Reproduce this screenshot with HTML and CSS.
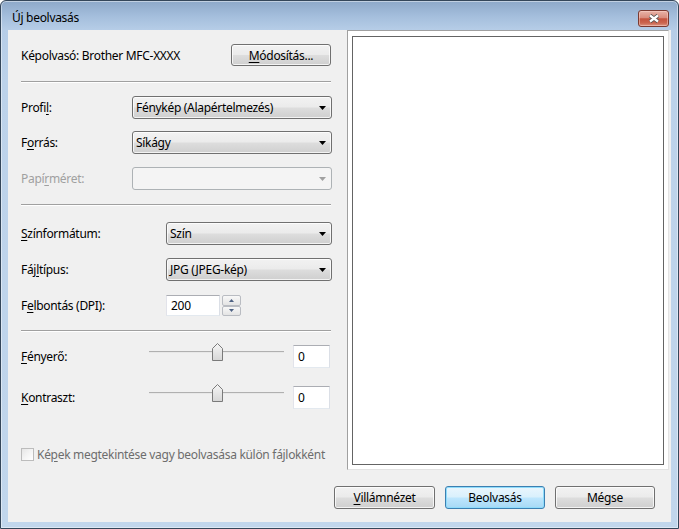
FILE: index.html
```html
<!DOCTYPE html>
<html lang="hu">
<head>
<meta charset="utf-8">
<title>Új beolvasás</title>
<link rel="stylesheet" href="styles.css">
</head>
<body>
<div class="window">
  <div class="titlebar">
    <span class="title">Új beolvasás</span>
    <button class="close" type="button" aria-label="Bezárás">
      <svg width="12" height="9" viewBox="0 0 12 9">
        <path d="M2 1.5 L10 7.5 M10 1.5 L2 7.5" stroke="#505050" stroke-width="4" fill="none"/>
        <path d="M2 1.5 L10 7.5 M10 1.5 L2 7.5" stroke="#ffffff" stroke-width="2.2" fill="none"/>
      </svg>
    </button>
  </div>

  <div class="client">
    <div class="settings">
      <div class="row scanner-row">
        <span class="scanner-name">Képolvasó: Brother MFC-XXXX</span>
        <button class="btn btn-change" type="button"><u>M</u>ódosítás...</button>
      </div>

      <div class="sep sep-top"></div>

      <div class="row field row-profile">
        <span class="label label-wide">Profi<u>l</u>:</span>
        <div class="combo"><span class="combo-text">Fénykép (Alapértelmezés)</span><svg class="arrow" width="7" height="4" viewBox="0 0 7 4"><polygon points="0,0 7,0 3.5,4"/></svg></div>
      </div>

      <div class="row field row-source">
        <span class="label label-wide">F<u>o</u>rrás:</span>
        <div class="combo"><span class="combo-text">Síkágy</span><svg class="arrow" width="7" height="4" viewBox="0 0 7 4"><polygon points="0,0 7,0 3.5,4"/></svg></div>
      </div>

      <div class="row field row-paper">
        <span class="label label-wide disabled">Papí<u>r</u>méret:</span>
        <div class="combo combo-disabled"><span class="combo-text"></span><svg class="arrow" width="7" height="4" viewBox="0 0 7 4"><polygon points="0,0 7,0 3.5,4"/></svg></div>
      </div>

      <div class="sep sep-mid"></div>

      <div class="row field row-color">
        <span class="label label-narrow"><u>S</u>zínformátum:</span>
        <div class="combo"><span class="combo-text">Szín</span><svg class="arrow" width="7" height="4" viewBox="0 0 7 4"><polygon points="0,0 7,0 3.5,4"/></svg></div>
      </div>

      <div class="row field row-type">
        <span class="label label-narrow">Fáj<u>l</u>típus:</span>
        <div class="combo"><span class="combo-text">JPG (JPEG-kép)</span><svg class="arrow" width="7" height="4" viewBox="0 0 7 4"><polygon points="0,0 7,0 3.5,4"/></svg></div>
      </div>

      <div class="row row-dpi">
        <span class="label label-narrow">F<u>e</u>lbontás (DPI):</span>
        <div class="edit edit-dpi">200</div>
        <div class="spinner">
          <span class="spin-btn"><svg width="5" height="3" viewBox="0 0 5 3"><polygon points="0,3 5,3 2.5,0"/></svg></span>
          <span class="spin-btn"><svg width="5" height="3" viewBox="0 0 5 3"><polygon points="0,0 5,0 2.5,3"/></svg></span>
        </div>
      </div>

      <div class="sep sep-low"></div>

      <div class="row row-slider row-bright">
        <span class="label label-slider"><u>F</u>ényerő:</span>
        <div class="slider">
          <div class="track"></div>
          <svg class="thumb" width="11" height="18" viewBox="0 0 11 18">
            <defs>
              <linearGradient id="thumbFill" x1="0" y1="0" x2="0" y2="1">
                <stop offset="0" stop-color="#f6f6f6"/>
                <stop offset="1" stop-color="#d6d6d6"/>
              </linearGradient>
            </defs>
            <path d="M0.5 17.5 V5.5 L5.5 0.5 L10.5 5.5 V17.5 Z" fill="url(#thumbFill)" stroke="#7a7a7a"/>
          </svg>
        </div>
        <div class="edit edit-value">0</div>
      </div>

      <div class="row row-slider row-contrast">
        <span class="label label-slider"><u>K</u>ontraszt:</span>
        <div class="slider">
          <div class="track"></div>
          <svg class="thumb" width="11" height="18" viewBox="0 0 11 18">
            <path d="M0.5 17.5 V5.5 L5.5 0.5 L10.5 5.5 V17.5 Z" fill="url(#thumbFill)" stroke="#7a7a7a"/>
          </svg>
        </div>
        <div class="edit edit-value">0</div>
      </div>

      <div class="row row-check">
        <span class="checkbox"></span>
        <span class="check-text">Ké<u>p</u>ek megtekintése vagy beolvasása külön fájlokként</span>
      </div>
    </div>

    <div class="preview">
      <div class="preview-canvas"></div>
    </div>

    <div class="actions">
      <button class="btn btn-action btn-quick" type="button"><u>V</u>illámnézet</button>
      <button class="btn btn-action btn-default" type="button">Beolvasás</button>
      <button class="btn btn-action" type="button">Mégse</button>
    </div>
  </div>
</div>
</body>
</html>
```

FILE: styles.css
```css
* {
  box-sizing: border-box;
}

html,
body {
  margin: 0;
  padding: 0;
}

body {
  width: 679px;
  height: 529px;
  overflow: hidden;
  background: #ffffff;
  font-family: "Segoe UI", "Noto Sans", "DejaVu Sans", sans-serif;
  font-size: 12px;
  letter-spacing: -0.3px;
  color: #000000;
}

u {
  text-decoration: underline;
  text-underline-offset: 2px;
}

/* ---------- window frame ---------- */
.window {
  width: 679px;
  height: 529px;
  display: flex;
  flex-direction: column;
  padding: 0 7px 6px 7px;
  border: 1px solid #34465a;
  border-radius: 6px 6px 0 0;
  background: linear-gradient(to bottom, #8da8c9 0px, #a4bedc 15px, #b6cde7 29px, #bcd2ea 80px, #c1d6ec 100%);
  box-shadow: inset 0 0 0 1px rgba(255, 255, 255, 0.45);
}

.titlebar {
  height: 29px;
  display: flex;
  align-items: flex-start;
  flex: none;
}

.title {
  margin: 9px 0 0 4px;
  line-height: 16px;
}

.close {
  width: 31px;
  height: 17px;
  margin: 9px 2px 0 auto;
  padding: 0;
  display: flex;
  align-items: center;
  justify-content: center;
  border: 1px solid #7a3a31;
  border-radius: 3px;
  background: linear-gradient(to bottom, #e8b3a8 0%, #d98c7d 45%, #c4533e 52%, #cb664f 80%, #dd9583 100%);
  box-shadow: inset 0 0 0 1px rgba(255, 220, 210, 0.45);
}

/* ---------- client area ---------- */
.client {
  flex: 1;
  display: grid;
  grid-template-columns: 339px 322px;
  grid-template-rows: 440px auto;
  padding-right: 2px;
  background: #f0f0f0;
}

.settings {
  grid-column: 1;
  grid-row: 1;
  display: flex;
  flex-direction: column;
  padding: 14px 15px 0 13px;
}

.row {
  display: flex;
  align-items: center;
  flex: none;
}

.scanner-row {
  height: 22px;
  justify-content: space-between;
}

.sep {
  height: 2px;
  margin-right: 1px;
  border-top: 1px solid #a0a0a0;
  border-bottom: 1px solid #ffffff;
  flex: none;
}

.sep-top { margin-top: 15px; }
.sep-mid { margin-top: 14px; }
.sep-low { margin-top: 14px; }

.field { height: 23px; }
.row-profile { margin-top: 13px; }
.row-source { margin-top: 12px; }
.row-paper { margin-top: 13px; }
.row-color { margin-top: 16px; }
.row-type { margin-top: 13px; }
.row-dpi { margin-top: 14px; height: 21px; }
.row-bright { margin-top: 13px; }
.row-contrast { margin-top: 18px; }
.row-check { margin-top: 39px; height: 13px; }

.label {
  flex: none;
  white-space: nowrap;
}

.label-wide { width: 111px; }
.label-narrow { width: 145px; }
.label-slider { width: 128px; }

.disabled {
  color: #a0a0a0;
}

/* ---------- buttons ---------- */
.btn {
  font: inherit;
  letter-spacing: inherit;
  color: #000000;
  padding: 0;
  border: 1px solid #707070;
  border-radius: 3px;
  background: linear-gradient(to bottom, #f2f2f2 0%, #ebebeb 48%, #dddddd 52%, #cfcfcf 100%);
  box-shadow: inset 0 0 0 1px rgba(255, 255, 255, 0.75);
}

.btn-change {
  width: 100px;
  height: 22px;
  margin-right: 1px;
}

.actions {
  grid-column: 1 / -1;
  grid-row: 2;
  display: flex;
  justify-content: flex-end;
  gap: 10px;
  padding: 16px 14px 13px 0;
}

.btn-action {
  width: 100px;
  height: 23px;
}

.btn-quick {
  width: 101px;
}

.btn-default {
  border-color: #3c7fb1;
  background: linear-gradient(to bottom, #eaf6fd 0%, #d9f0fc 48%, #bee6fd 52%, #a7d9f5 100%);
  box-shadow: inset 0 0 0 1px #8fdcfb;
}

/* ---------- combo boxes ---------- */
.combo {
  flex: 1;
  height: 23px;
  display: flex;
  align-items: center;
  padding: 0 5px 0 3px;
  border: 1px solid #707070;
  border-radius: 3px;
  background: linear-gradient(to bottom, #f2f2f2 0%, #ebebeb 48%, #dddddd 52%, #cfcfcf 100%);
  box-shadow: inset 0 0 0 1px rgba(255, 255, 255, 0.75);
}

.combo-text {
  flex: 1;
  white-space: nowrap;
}

.arrow {
  flex: none;
  fill: #000000;
}

.combo-disabled {
  border-color: #adb2b5;
  background: #f4f4f4;
  box-shadow: none;
}

.combo-disabled .arrow {
  fill: #a0a0a0;
}

/* ---------- edit boxes ---------- */
.edit {
  height: 100%;
  display: flex;
  align-items: center;
  padding-left: 4px;
  background: #ffffff;
  border: 1px solid;
  border-color: #abadb3 #dbdfe6 #e3e9ef #e2e3ea;
}

.edit-dpi {
  width: 54px;
  height: 21px;
}

.spinner {
  width: 19px;
  height: 21px;
  margin-left: 2px;
  display: flex;
  flex-direction: column;
}

.spin-btn {
  flex: 1;
  display: flex;
  align-items: center;
  justify-content: center;
  border: 1px solid #b9bcc2;
  border-radius: 2px;
  background: linear-gradient(to bottom, #f8f8f8, #e4e4e4);
  fill: #4e6283;
}

.edit-value {
  width: 37px;
  height: 23px;
}

/* ---------- sliders ---------- */
.row-slider {
  height: 23px;
}

.slider {
  position: relative;
  width: 135px;
  height: 18px;
  margin-right: 9px;
  align-self: flex-start;
  margin-top: -2px;
  flex: none;
}

.track {
  position: absolute;
  left: 0;
  right: 0;
  top: 8px;
  height: 2px;
  border-top: 1px solid #b0b0b0;
  border-bottom: 1px solid #e8e8e8;
}

.thumb {
  position: absolute;
  left: 63px;
  top: 0;
}

/* ---------- check box ---------- */
.checkbox {
  width: 13px;
  height: 13px;
  flex: none;
  border: 1px solid #bcbcbc;
  background: linear-gradient(135deg, #e6e6e6 0%, #f4f4f4 50%, #ffffff 100%);
}

.check-text {
  margin-left: 3px;
  color: #6d6d6d;
  white-space: nowrap;
}

/* ---------- preview ---------- */
.preview {
  grid-column: 2;
  grid-row: 1;
  padding: 5px 4px 4px 4px;
  background: #ffffff;
  border: 1px solid;
  border-color: #a0a0a0 #e3e3e3 #e3e3e3 #a0a0a0;
}

.preview-canvas {
  height: 100%;
  border: 1px solid #646464;
  background: #ffffff;
}
```
